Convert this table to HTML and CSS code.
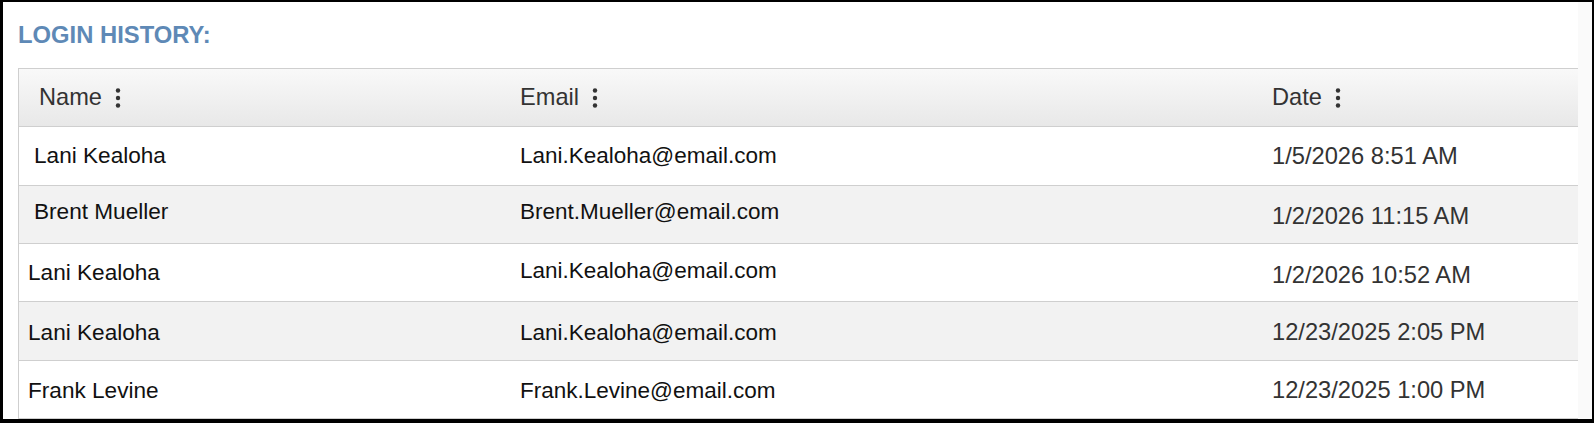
FILE: index.html
```html
<!DOCTYPE html>
<html lang="en">
<head>
<meta charset="utf-8">
<title>Login History</title>
<link rel="stylesheet" href="styles.css">
</head>
<body>
<div class="frame">
  <main class="main">
    <h1 class="title">LOGIN HISTORY:</h1>
    <div class="grid">
      <div class="row row--head">
        <div class="cell cell--name-head">Name<svg class="kebab" viewBox="0 0 6 22" width="6" height="22"><circle cx="3" cy="3.5" r="2.2"/><circle cx="3" cy="11" r="2.2"/><circle cx="3" cy="18.5" r="2.2"/></svg></div>
        <div class="cell">Email<svg class="kebab" viewBox="0 0 6 22" width="6" height="22"><circle cx="3" cy="3.5" r="2.2"/><circle cx="3" cy="11" r="2.2"/><circle cx="3" cy="18.5" r="2.2"/></svg></div>
        <div class="cell">Date<svg class="kebab" viewBox="0 0 6 22" width="6" height="22"><circle cx="3" cy="3.5" r="2.2"/><circle cx="3" cy="11" r="2.2"/><circle cx="3" cy="18.5" r="2.2"/></svg></div>
      </div>
      <div class="row">
        <div class="cell cell--name cell--indent">Lani Kealoha</div>
        <div class="cell cell--email">Lani.Kealoha@email.com</div>
        <div class="cell cell--date cell--lo-xs">1/5/2026 8:51 AM</div>
      </div>
      <div class="row row--alt">
        <div class="cell cell--name cell--indent cell--hi">Brent Mueller</div>
        <div class="cell cell--email cell--hi">Brent.Mueller@email.com</div>
        <div class="cell cell--date cell--lo">1/2/2026 11:15 AM</div>
      </div>
      <div class="row">
        <div class="cell cell--name">Lani Kealoha</div>
        <div class="cell cell--email cell--hi-sm">Lani.Kealoha@email.com</div>
        <div class="cell cell--date cell--lo">1/2/2026 10:52 AM</div>
      </div>
      <div class="row row--alt row--lo">
        <div class="cell cell--name">Lani Kealoha</div>
        <div class="cell cell--email">Lani.Kealoha@email.com</div>
        <div class="cell cell--date">12/23/2025 2:05 PM</div>
      </div>
      <div class="row row--lo-sm">
        <div class="cell cell--name">Frank Levine</div>
        <div class="cell cell--email">Frank.Levine@email.com</div>
        <div class="cell cell--date">12/23/2025 1:00 PM</div>
      </div>
    </div>
  </main>
  <div class="gutter"></div>
</div>
</body>
</html>
```

FILE: styles.css
```css
* { box-sizing: border-box; }

html, body {
  margin: 0;
  padding: 0;
  background: #ffffff;
}

body {
  font-family: "Liberation Sans", Arial, sans-serif;
}

.frame {
  width: 1594px;
  height: 423px;
  border-style: solid;
  border-color: #000;
  border-width: 2px 2px 4px 3px;
  display: flex;
  overflow: hidden;
  background: #fff;
}

.main {
  flex: 1;
  min-width: 0;
  padding: 19px 0 0 15px;
}

.gutter {
  width: 14px;
  flex: none;
  background: #fafafa;
}

.title {
  margin: 0 0 20px 0;
  font-size: 23.8px;
  line-height: 27px;
  font-weight: bold;
  color: #5e89b6;
}

.grid {
  border-left: 1px solid #cfcfcf;
  border-top: 1px solid #cfcfcf;
}

.row {
  display: grid;
  grid-template-columns: 486px 752px 1fr;
  height: 58.33px;
  border-bottom: 1px solid #cfcfcf;
  background: #ffffff;
  font-size: 23px;
}

.row--head {
  background: linear-gradient(to bottom, #f9f9f9 0%, #e8e8e8 100%);
  color: #333;
  font-size: 23.6px;
}

.row--alt {
  background: #f2f2f2;
}

.cell {
  display: flex;
  align-items: center;
  padding-left: 15px;
  white-space: nowrap;
}

.cell--name-head {
  padding-left: 20px;
}

.cell--name {
  color: #111;
  padding-left: 9px;
  font-size: 22.6px;
}

.cell--indent {
  padding-left: 15px;
}

.cell--email {
  color: #111;
  font-size: 22.5px;
}

.cell--date {
  color: #333;
  font-size: 23.7px;
}

.cell--hi { padding-bottom: 5px; }
.cell--hi-sm { padding-bottom: 4px; }
.cell--lo { padding-top: 5px; }
.cell--lo-xs { padding-top: 2px; }

.row--lo .cell { padding-top: 4px; }
.row--lo-sm .cell { padding-top: 3px; }

.kebab {
  margin-left: 13px;
  fill: #333;
  flex: none;
}
```
